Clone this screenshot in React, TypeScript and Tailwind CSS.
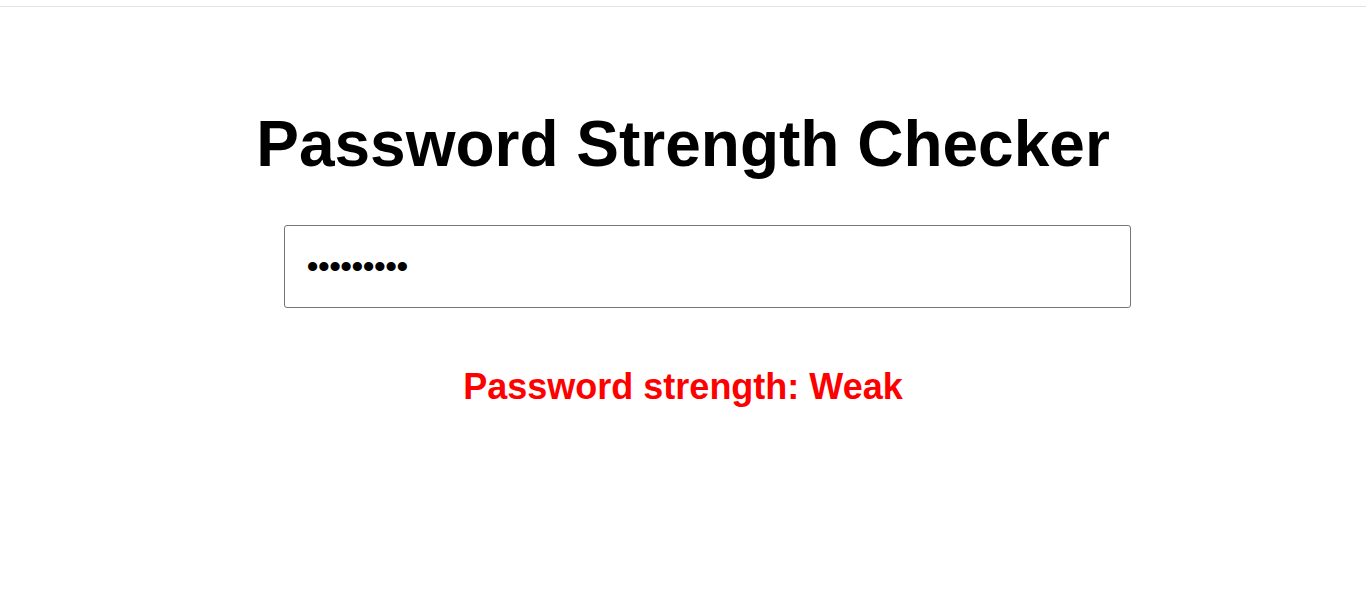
import { useState } from "react";

const App = () => {
  const [password, setPassword] = useState("abc123xyz");

  return (
    <div className="min-h-screen bg-white font-['Liberation_Sans',Arial,sans-serif] text-black">
      <div className="h-[6px]" />
      <div className="border-t border-[#e3e3e3]" />

      <h1 className="mt-[101px] text-center text-[64px] font-bold leading-[72px]">
        Password Strength Checker
      </h1>

      <input
        type="password"
        value={password}
        onChange={(e) => setPassword(e.target.value)}
        className="mt-[45px] ml-[284px] block h-[83px] w-[847px] rounded-[3px] border border-[#767676] bg-white pl-[22px] text-[32px] font-bold text-black outline-none"
      />

      <p className="mt-[59px] text-center text-[36px] font-bold leading-[40px] text-[#ff0000]">
        Password strength: Weak
      </p>
    </div>
  );
};

export default App;
